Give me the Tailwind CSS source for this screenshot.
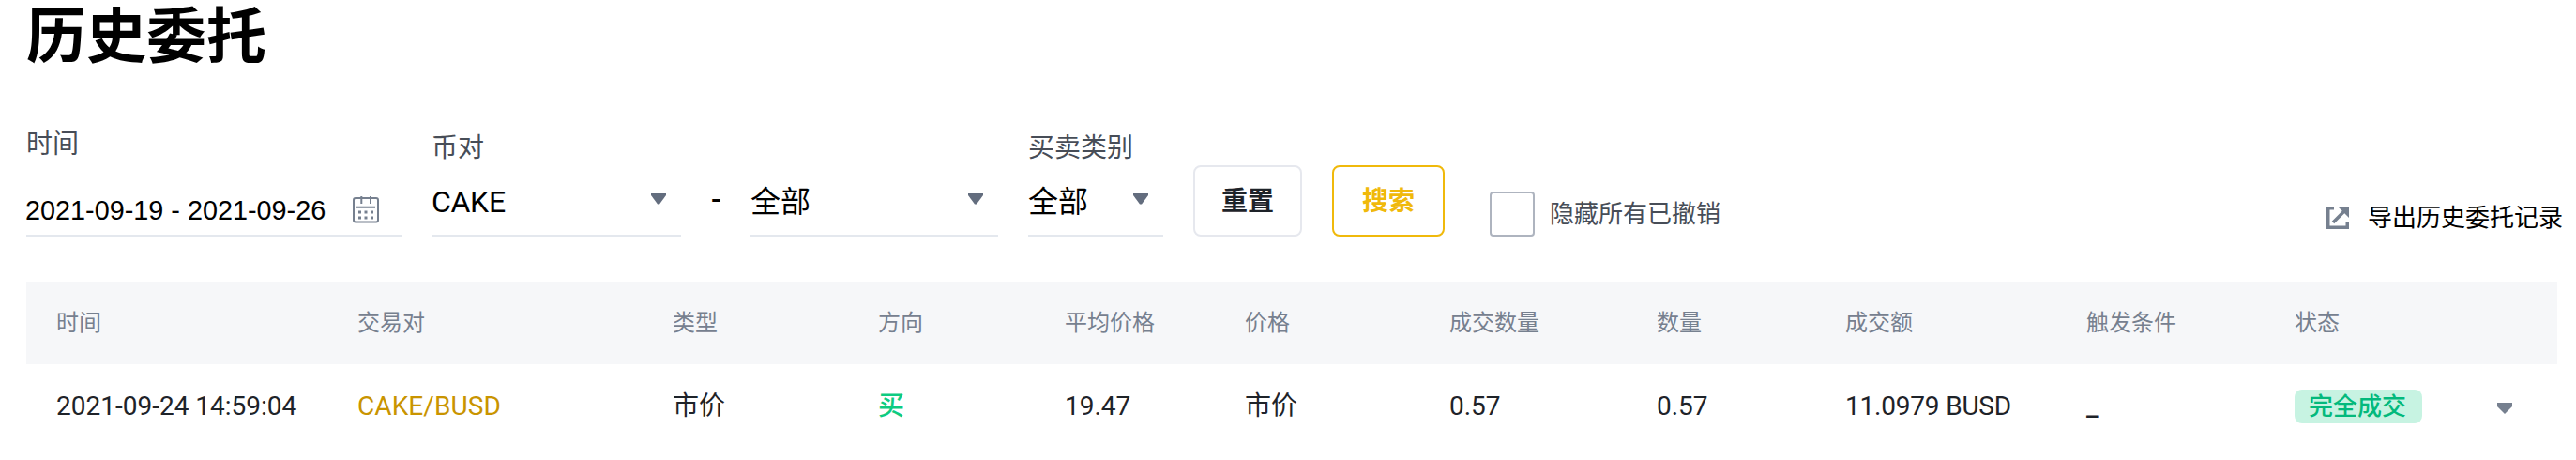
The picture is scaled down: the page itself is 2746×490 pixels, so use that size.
<!DOCTYPE html>
<html lang="zh-CN">
<head>
<meta charset="utf-8">
<title>历史委托</title>
<script src="https://cdn.jsdelivr.net/npm/@tailwindcss/browser@4"></script>
</head>
<body class="h-[490px] w-[2746px] bg-white font-['Roboto','Noto_Sans_CJK_SC',sans-serif] text-black">
<main class="flex flex-col pl-7">
  <h1 class="h-[120px] font-['Noto_Sans_CJK_SC',sans-serif] text-[64px] leading-[66px] font-bold whitespace-nowrap">历史委托</h1>

  <section class="flex h-[180px] items-start whitespace-nowrap">
    <div class="flex h-[132px] w-[400px] flex-col border-b-2 border-[#e4e8ee]">
      <label class="pt-3.5 text-[28px] leading-10 text-[#474d57]">时间</label>
      <div class="mt-[22px] flex h-14 items-start">
        <span class="-ml-px w-[349px] font-['Liberation_Sans',sans-serif] text-[28.8px] leading-[56px]">2021-09-19 - 2021-09-26</span>
        <svg class="mt-3 h-[30px] w-7" viewBox="0 0 28 30" fill="none" stroke="#76808f" stroke-width="2">
          <rect x="1" y="3" width="26" height="25.500" rx="2"/>
          <path d="M9.300 1v8M19 1v8M4 12.800h20"/>
          <path d="M6 18h3M12.500 18h3M19 18h3M6 24h3M12.500 24h3M19 24h3" stroke-width="3"/>
        </svg>
      </div>
    </div>

    <div class="ml-8 flex h-[132px] w-[266px] flex-col border-b-2 border-[#e4e8ee]">
      <label class="pt-[18px] text-[28px] leading-10 text-[#474d57]">币对</label>
      <div class="mt-2.5 flex h-14 items-start justify-between pr-4">
        <span class="text-[32px] leading-[54px] tracking-[-0.3px]">CAKE</span>
        <svg class="mt-[18px] h-3 w-4" viewBox="0 0 16 12" fill="#636d7e"><path d="M0 0h16v2L9 11.500H7L0 2z"/></svg>
      </div>
    </div>

    <div class="w-[74px] pt-[66px] pl-8 text-[32px] leading-[52px] font-medium">-</div>

    <div class="flex h-[132px] w-[264px] flex-col border-b-2 border-[#e4e8ee]">
      <div class="mt-[68px] flex h-14 items-start justify-between pr-4">
        <span class="text-[32px] leading-[54px]">全部</span>
        <svg class="mt-[18px] h-3 w-4" viewBox="0 0 16 12" fill="#636d7e"><path d="M0 0h16v2L9 11.500H7L0 2z"/></svg>
      </div>
    </div>

    <div class="ml-8 flex h-[132px] w-36 flex-col border-b-2 border-[#e4e8ee]">
      <label class="pt-[18px] text-[28px] leading-10 text-[#474d57]">买卖类别</label>
      <div class="mt-2.5 flex h-14 items-start justify-between pr-4">
        <span class="text-[32px] leading-[54px]">全部</span>
        <svg class="mt-[18px] h-3 w-4" viewBox="0 0 16 12" fill="#636d7e"><path d="M0 0h16v2L9 11.500H7L0 2z"/></svg>
      </div>
    </div>

    <button class="mt-14 ml-8 h-[76px] w-[116px] rounded-lg border-2 border-[#e6e8ee] pt-0.5 text-[28px] font-bold text-[#1e2329]">重置</button>
    <button class="mt-14 ml-8 h-[76px] w-[120px] rounded-lg border-2 border-[#f0b90b] pt-0.5 text-[28px] font-bold text-[#f0b90b]">搜索</button>

    <div class="mt-[84px] ml-12 flex h-12 items-center gap-4">
      <span class="size-12 rounded-[4px] border-2 border-[#aeb4bf]"></span>
      <span class="text-[26px] leading-[46px] text-[#474d57]">隐藏所有已撤销</span>
    </div>

    <div class="mt-[89px] mr-[14px] ml-auto flex items-center gap-5">
      <svg class="size-6" viewBox="0 0 24 24" fill="none" stroke="#76808f" stroke-width="3.500">
        <path d="M8 1.750H1.750V22.250H22.250V16"/>
        <path d="M7 17L20 4"/>
        <path d="M12 0H24V12L20.500 8.500 15.500 3.500z" fill="#76808f" stroke="none"/>
      </svg>
      <span class="text-[26px] leading-[46px]">导出历史委托记录</span>
    </div>
  </section>

  <section class="w-[2698px] whitespace-nowrap">
    <div class="grid h-[88px] grid-cols-[321px_336px_219px_199px_192px_218px_221px_201px_257px_222px_1fr] items-center bg-[#f6f7f9] pl-8 text-[24px] text-[#76808f]">
      <span>时间</span><span>交易对</span><span>类型</span><span>方向</span><span>平均价格</span><span>价格</span><span>成交数量</span><span>数量</span><span>成交额</span><span>触发条件</span><span>状态</span>
    </div>
    <div class="grid h-[90px] grid-cols-[321px_336px_219px_199px_192px_218px_221px_201px_257px_222px_1fr] items-center pl-8 text-[28px] text-[#1e2329]">
      <span>2021-09-24 14:59:04</span><span class="tracking-[0.1px] text-[#c99400]">CAKE/BUSD</span><span>市价</span><span class="font-medium text-[#0ecb81]">买</span><span>19.47</span><span>市价</span><span>0.57</span><span>0.57</span><span class="tracking-[-0.2px]">11.0979 BUSD</span><span class="font-medium">_</span>
      <span class="flex items-center">
        <span class="flex h-9 w-[136px] items-center justify-center rounded-lg bg-[#c7f3e2] pr-0.5 text-[26px] font-medium text-[#03b97c]">完全成交</span>
        <svg class="mt-1 ml-20 h-3 w-4" viewBox="0 0 16 12" fill="#76808f"><path d="M0 0h16v4L8 12 0 4z"/></svg>
      </span>
    </div>
  </section>
</main>
</body>
</html>
